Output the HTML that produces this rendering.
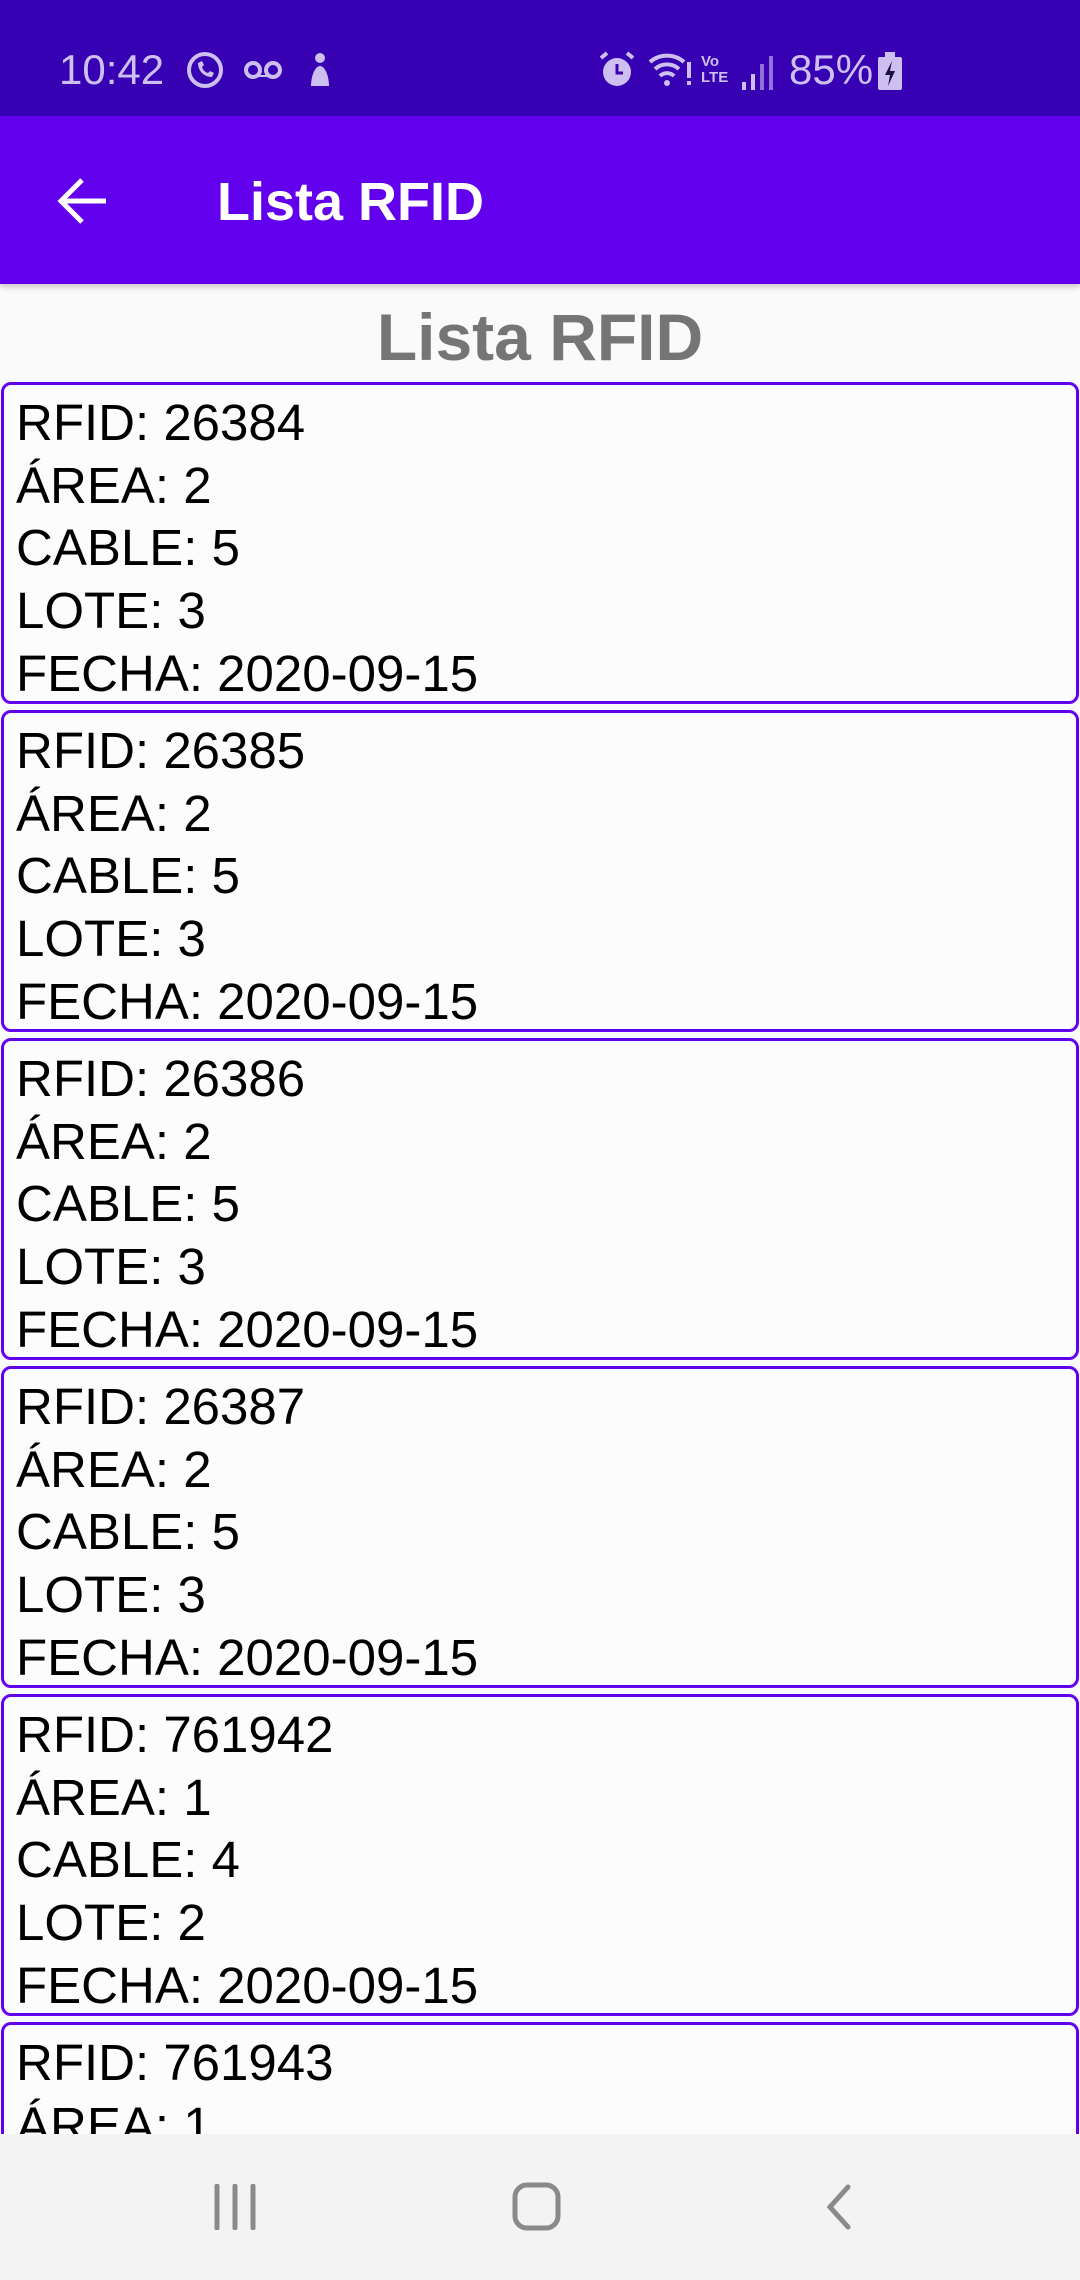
<!DOCTYPE html>
<html style="overflow:hidden"><head><meta charset="utf-8"><style>
*{margin:0;padding:0;box-sizing:border-box}
html,body{width:1080px;height:2280px;overflow:hidden}
body{background:#fafafa;font-family:"Liberation Sans",sans-serif}
#w{position:relative;width:1080px;height:2280px;overflow:hidden}
.sb{position:absolute;left:0;top:0;width:1080px;height:116px;background:#3700b3;color:#cdbff0}
.ab{position:absolute;left:0;top:116px;width:1080px;height:168px;background:#6200ee;box-shadow:0 3px 6px rgba(0,0,0,.2)}
.h{position:absolute;left:0;width:1080px;top:296px;text-align:center;font-weight:bold;font-size:66px;color:#757575;line-height:82px}
.card{position:absolute;left:1px;width:1078px;height:322px;border:3px solid #6200ee;border-radius:10px;background:#fcfcfc;padding-left:12px;padding-top:7px;font-size:51px;line-height:62.7px;color:#000;overflow:hidden}
.nav{position:absolute;left:0;top:2134px;width:1080px;height:146px;background:#f3f3f3}
</style></head><body><div id="w">
<div class="sb">
<div style="position:absolute;left:59px;top:46px;font-size:42px;line-height:48px">10:42</div>
<svg style="position:absolute;left:185px;top:50px" width="40" height="40" viewBox="0 0 40 40"><circle cx="20" cy="20" r="16" fill="none" stroke="#cdbff0" stroke-width="4"/><path d="M13 13c0 8 6 14 14 14l2-4-4-2-2 2c-3-1-5-3-6-6l2-2-2-4z" fill="#cdbff0"/></svg>
<svg style="position:absolute;left:243px;top:58px" width="40" height="24" viewBox="0 0 40 24"><circle cx="10" cy="12" r="7" fill="none" stroke="#cdbff0" stroke-width="4"/><circle cx="30" cy="12" r="7" fill="none" stroke="#cdbff0" stroke-width="4"/><rect x="10" y="17" width="20" height="2" fill="#cdbff0"/></svg>
<svg style="position:absolute;left:303px;top:52px" width="34" height="38" viewBox="0 0 34 38"><circle cx="17" cy="6" r="5" fill="#cdbff0"/><path d="M8 34c0-10 4-20 9-20s9 10 9 20z" fill="#cdbff0"/></svg>
<svg style="position:absolute;left:597px;top:50px" width="40" height="40" viewBox="0 0 40 40"><circle cx="20" cy="22" r="14" fill="#cdbff0"/><path d="M20 14v9h6" stroke="#3700b3" stroke-width="3" fill="none"/><path d="M4 8l6-5M36 8l-6-5" stroke="#cdbff0" stroke-width="4"/></svg>
<svg style="position:absolute;left:648px;top:52px" width="44" height="36" viewBox="0 0 44 36"><path d="M2 10a26 26 0 0 1 34 0M7 17a18 18 0 0 1 24 0M12 24a10 10 0 0 1 14 0" stroke="#cdbff0" stroke-width="4" fill="none"/><circle cx="19" cy="31" r="3" fill="#cdbff0"/><rect x="39" y="10" width="4" height="16" fill="#cdbff0"/><rect x="39" y="29" width="4" height="4" fill="#cdbff0"/></svg>
<div style="position:absolute;left:701px;top:54px;font-size:15px;line-height:16px;font-weight:bold">Vo<br>LTE</div>
<svg style="position:absolute;left:740px;top:54px" width="36" height="36" viewBox="0 0 36 36"><rect x="2" y="28" width="4" height="8" fill="#cdbff0"/><rect x="11" y="20" width="4" height="16" fill="#cdbff0"/><rect x="20" y="10" width="4" height="26" fill="#cdbff0" opacity=".6"/><rect x="29" y="2" width="4" height="34" fill="#cdbff0" opacity=".6"/></svg>
<div style="position:absolute;left:789px;top:46px;font-size:42px;line-height:48px">85%</div>
<svg style="position:absolute;left:877px;top:52px" width="26" height="38" viewBox="0 0 26 38"><rect x="8" y="0" width="10" height="5" fill="#cdbff0"/><rect x="1" y="5" width="24" height="33" rx="2" fill="#cdbff0"/><path d="M15 9l-7 14h5l-2 11 7-15h-5z" fill="#1a1040"/></svg>
</div>
<div class="ab">
<svg style="position:absolute;left:56px;top:60px" width="54" height="50" viewBox="0 0 54 50"><path d="M50 25H6M26 4L5 25l21 21" stroke="#fff" stroke-width="5" fill="none"/></svg>
<div style="position:absolute;left:217px;top:54px;font-size:54px;line-height:64px;color:#fff;font-weight:bold">Lista RFID</div>
</div>
<div class="h">Lista RFID</div>
<div class="card" style="top:382px">RFID: 26384<br>ÁREA: 2<br>CABLE: 5<br>LOTE: 3<br>FECHA: 2020-09-15</div>
<div class="card" style="top:710px">RFID: 26385<br>ÁREA: 2<br>CABLE: 5<br>LOTE: 3<br>FECHA: 2020-09-15</div>
<div class="card" style="top:1038px">RFID: 26386<br>ÁREA: 2<br>CABLE: 5<br>LOTE: 3<br>FECHA: 2020-09-15</div>
<div class="card" style="top:1366px">RFID: 26387<br>ÁREA: 2<br>CABLE: 5<br>LOTE: 3<br>FECHA: 2020-09-15</div>
<div class="card" style="top:1694px">RFID: 761942<br>ÁREA: 1<br>CABLE: 4<br>LOTE: 2<br>FECHA: 2020-09-15</div>
<div class="card" style="top:2022px;height:112px;border-bottom:none;border-radius:10px 10px 0 0">RFID: 761943<br>ÁREA: 1</div>
<div class="nav">
<svg style="position:absolute;left:210px;top:50px" width="50" height="46" viewBox="0 0 50 46"><path d="M7 2v42M25 2v42M43 2v42" stroke="#8a8a8a" stroke-width="5" stroke-linecap="round"/></svg>
<svg style="position:absolute;left:510px;top:48px" width="54" height="50" viewBox="0 0 54 50"><rect x="5" y="3" width="43" height="43" rx="12" stroke="#8a8a8a" stroke-width="5" fill="none"/></svg>
<svg style="position:absolute;left:820px;top:50px" width="36" height="46" viewBox="0 0 36 46"><path d="M28 3L10 23l18 20" stroke="#8a8a8a" stroke-width="5" fill="none" stroke-linecap="round"/></svg>
</div>
</div></body></html>
